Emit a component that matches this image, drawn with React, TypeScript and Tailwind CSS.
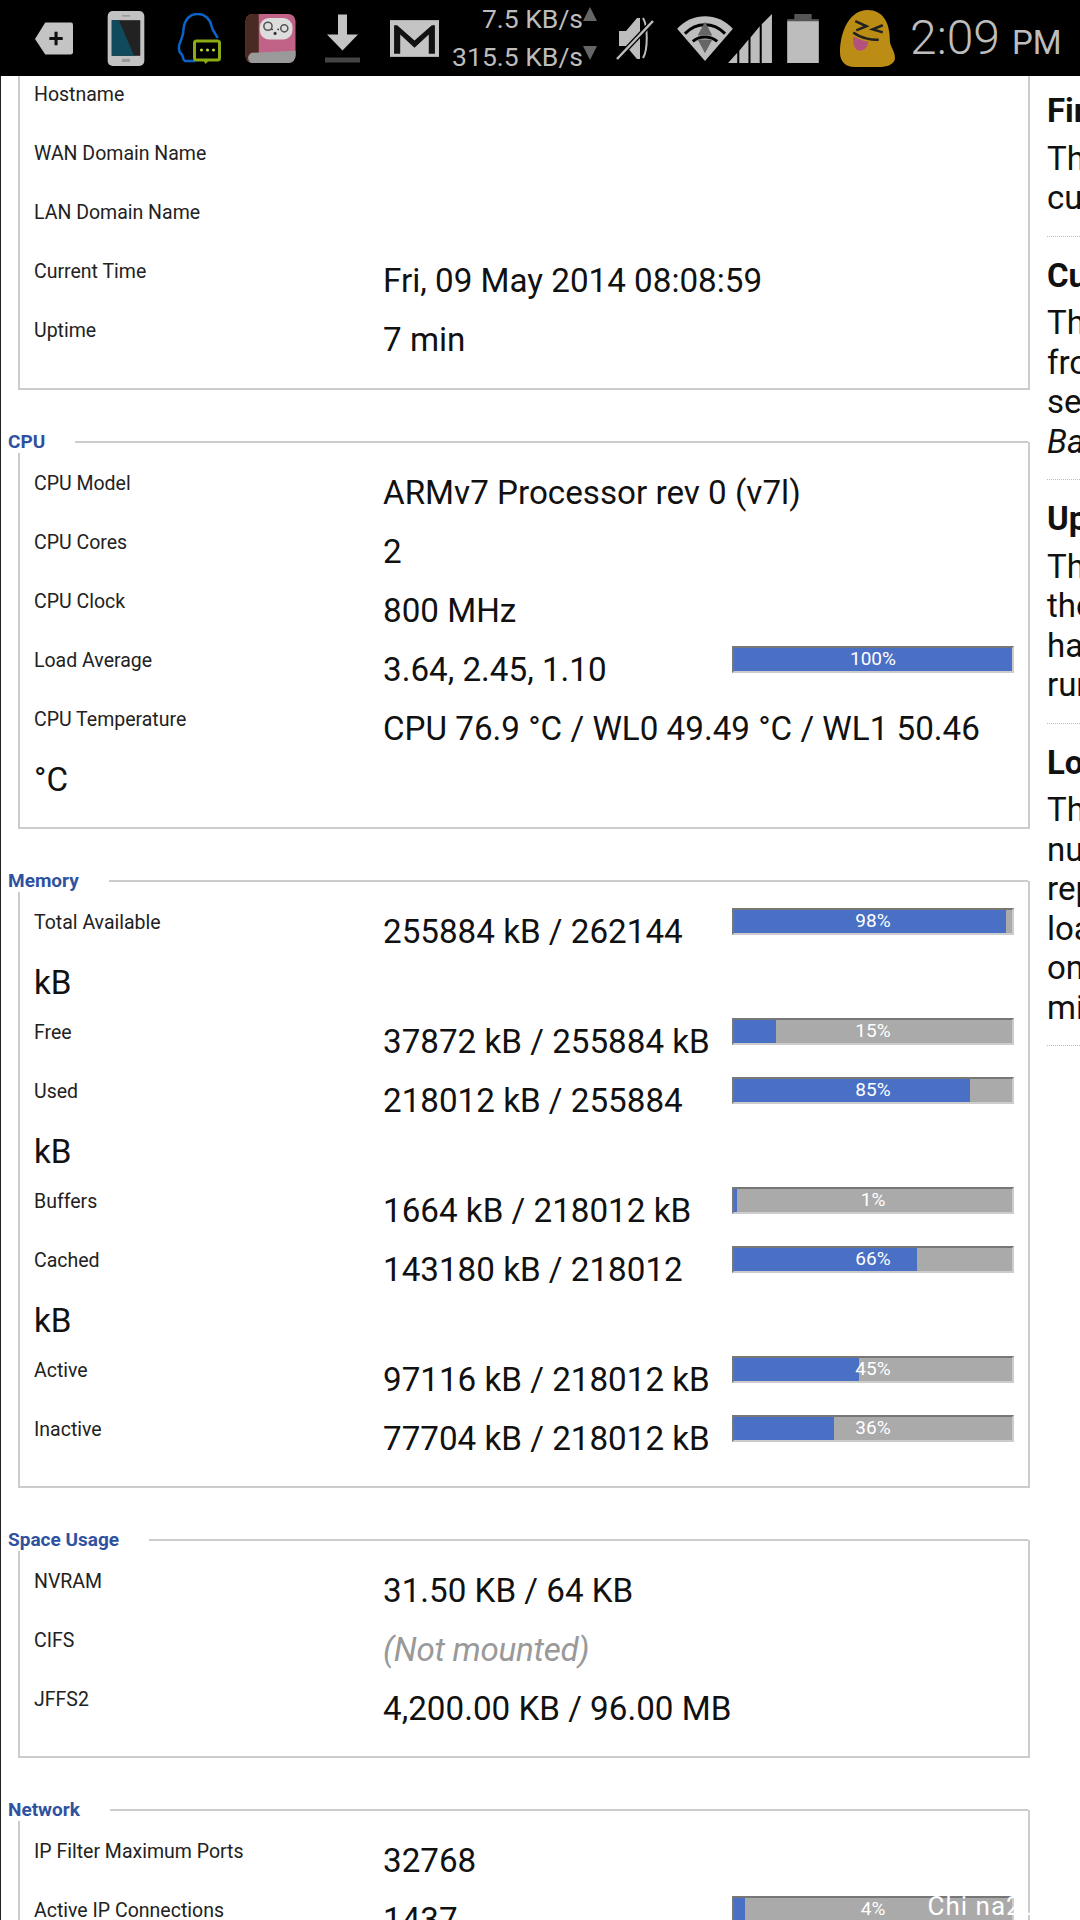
import React from 'react';

type Row = { label: string; value?: string; bar?: number; muted?: boolean };

const SECTIONS: { title: string; rows: Row[] }[] = [
  {
    title: 'CPU',
    rows: [
      { label: 'CPU Model', value: 'ARMv7 Processor rev 0 (v7l)' },
      { label: 'CPU Cores', value: '2' },
      { label: 'CPU Clock', value: '800 MHz' },
      { label: 'Load Average', value: '3.64, 2.45, 1.10', bar: 100 },
      { label: 'CPU Temperature', value: 'CPU 76.9 °C / WL0 49.49 °C / WL1 50.46 °C' },
    ],
  },
  {
    title: 'Memory',
    rows: [
      { label: 'Total Available', value: '255884 kB / 262144 kB', bar: 98 },
      { label: 'Free', value: '37872 kB / 255884 kB', bar: 15 },
      { label: 'Used', value: '218012 kB / 255884 kB', bar: 85 },
      { label: 'Buffers', value: '1664 kB / 218012 kB', bar: 1 },
      { label: 'Cached', value: '143180 kB / 218012 kB', bar: 66 },
      { label: 'Active', value: '97116 kB / 218012 kB', bar: 45 },
      { label: 'Inactive', value: '77704 kB / 218012 kB', bar: 36 },
    ],
  },
  {
    title: 'Space Usage',
    rows: [
      { label: 'NVRAM', value: '31.50 KB / 64 KB' },
      { label: 'CIFS', value: '(Not mounted)', muted: true },
      { label: 'JFFS2', value: '4,200.00 KB / 96.00 MB' },
    ],
  },
  {
    title: 'Network',
    rows: [
      { label: 'IP Filter Maximum Ports', value: '32768' },
      { label: 'Active IP Connections', value: '1437', bar: 4 },
    ],
  },
];

const HELP = [
  { title: 'Firmware Version', lines: ['The version of firmware', 'currently running.'] },
  {
    title: 'Current Time',
    lines: ['The current time taken', 'from the router, and', 'set under', 'Basic'],
  },
  {
    title: 'Uptime',
    lines: ['The length of time', 'the router', 'has been', 'running.'],
  },
  {
    title: 'Load Average',
    lines: ['The load average', 'number', 'represents', 'load', 'on the CPU', 'minutes.'],
  },
];

function InfoRow({ row }: { row: Row }) {
  return (
    <div className="flow-root min-h-[59px] pt-[4px] pb-[4px] pl-[14px] pr-[14px] text-[33.200px] leading-[51px] text-[#111]">
      <div className="float-left w-[349px] text-[19.500px] leading-[33px] text-[#222]">{row.label}</div>
      {row.bar !== undefined && (
        <div className="relative float-right mt-[2px] ml-[10px] h-[27px] w-[282px] border-t-2 border-l-2 border-t-[#777] border-l-[#777] border-r-2 border-b-2 border-r-[#ccc] border-b-[#ccc] bg-[#aaa]">
          <div className="h-full bg-[#4a70c6]" style={{ width: `${row.bar}%` }} />
          <div className="absolute inset-0 text-center text-[19px] leading-[22px] text-white">{row.bar}%</div>
        </div>
      )}
      {row.muted ? <em className="tracking-[-0.300px] text-[#999]">{row.value}</em> : row.value}
    </div>
  );
}

function Section({ title, rows }: { title: string; rows: Row[] }) {
  return (
    <section className="mt-[52px] ml-[17px] flow-root border-r-2 border-b-2 border-[#ccc]">
      <div className="-mt-[11px] -ml-[10px] flex h-[22px] items-center">
        <span className="pr-[30px] text-[19px] font-bold text-[#2f52a0]">{title}</span>
        <div className="flex-1 border-t-2 border-[#ccc]" />
      </div>
      <div className="border-l-2 border-[#ccc] pt-[10px] pb-[18px]">
        {rows.map(r => (
          <InfoRow key={r.label} row={r} />
        ))}
      </div>
    </section>
  );
}

function StatusBar() {
  return (
    <div className="flex h-[76px] items-center bg-black pl-[35px] text-[#bdbdbd]">
      {/* notification tag */}
      <svg width="38" height="33" viewBox="0 0 37 31" className="shrink-0">
        <path d="M10 0H35a2 2 0 0 1 2 2V29a2 2 0 0 1-2 2H10L0 16Z" fill="#c4c4c4" />
        <path d="M17 14h5V9h3v5h5v3h-5v5h-3v-5h-5Z" fill="#111" transform="translate(-3 0)" />
      </svg>
      {/* phone */}
      <svg width="38" height="55" viewBox="0 0 36 54" className="ml-[34px] shrink-0">
        <rect x="0" y="0" width="36" height="54" rx="5" fill="#c2c2c2" />
        <rect x="4" y="9" width="28" height="35" fill="#222" />
        <path d="M4 9h7L26 44H4Z" fill="#114a5c" />
        <rect x="14" y="47" width="8" height="3" rx="1" fill="#999" />
        <rect x="14" y="4" width="8" height="1.5" fill="#999" />
      </svg>
      {/* QQ bubble */}
      <svg width="45" height="51" viewBox="0 0 44 51" className="ml-[31px] shrink-0">
        <path
          d="M19 48H9C6 48 7 43 5 41C2 39 2 35 3 31C5 26 7 22 7 16C8 6 14 1 21 1C29 1 34 7 35 13C36 18 39 20 41 25"
          fill="none"
          stroke="#0b63c8"
          strokeWidth="2.5"
        />
        <rect x="18" y="28" width="25" height="19" rx="2" fill="#000" stroke="#8cab12" strokeWidth="3" />
        <path d="M26 46h8l-5 5Z" fill="#8cab12" />
        <circle cx="25" cy="37" r="1.6" fill="#b9d33a" />
        <circle cx="31" cy="37" r="1.6" fill="#b9d33a" />
        <circle cx="37" cy="37" r="1.6" fill="#b9d33a" />
      </svg>
      {/* pink book */}
      <svg width="51" height="49" viewBox="0 0 49 48" className="ml-[24px] shrink-0">
        <rect x="0" y="0" width="49" height="48" rx="7" fill="#c06386" />
        <path d="M0 7a7 7 0 0 1 7-7h6V38L5 47C2 46 0 44 0 41Z" fill="#4a2a22" />
        <path d="M6 38L49 36V41a7 7 0 0 1-7 7H10a5 5 0 0 1-4-10Z" fill="#9a9a9a" />
        <rect x="14" y="4" width="32" height="21" rx="9" fill="#ddd" />
        <circle cx="22" cy="12" r="4" fill="none" stroke="#555" strokeWidth="1.5" />
        <circle cx="38" cy="14" r="3.5" fill="none" stroke="#555" strokeWidth="1.5" />
        <circle cx="29" cy="19" r="1.5" fill="#333" />
        <circle cx="26" cy="15" r="0.9" fill="#333" />
        <circle cx="32" cy="15" r="0.9" fill="#333" />
      </svg>
      {/* download */}
      <svg width="35" height="49" viewBox="0 0 35 48" className="ml-[29px] shrink-0">
        <path d="M13 0h9V20h11L17.500 36 2 20H13Z" fill="#c4c4c4" />
        <rect x="0" y="43" width="35" height="5" fill="#444" />
      </svg>
      {/* gmail */}
      <svg width="49" height="37" viewBox="0 0 48 36" className="ml-[30px] shrink-0">
        <rect width="48" height="36" fill="#c4c4c4" />
        <path d="M4 33V5h3L24 20 41 5h3V33H38V14L24 27 10 14V33Z" fill="#111" />
      </svg>
      {/* speed */}
      <div className="ml-[12px] flex w-[146px] shrink-0 flex-col text-[26.500px] leading-[38px]">
        <div className="flex items-center justify-end">
          7.5 KB/s
          <svg width="14" height="14" viewBox="0 0 14 14" className="mb-[10px] shrink-0">
            <path d="M7 0L14 14H0Z" fill="#666" />
          </svg>
        </div>
        <div className="flex items-center justify-end">
          315.5 KB/s
          <svg width="14" height="14" viewBox="0 0 14 14" className="mb-[8px] shrink-0">
            <path d="M0 0H14L7 14Z" fill="#666" />
          </svg>
        </div>
      </div>
      {/* muted */}
      <svg width="38" height="46" viewBox="0 0 38 46" className="ml-[19px] shrink-0">
        <path d="M3 16h7L21 3h3V44h-3L10 31H3Z" fill="#bdbdbd" />
        <path d="M27 3c5 8 5 32 0 40" fill="none" stroke="#bdbdbd" strokeWidth="2" />
        <path d="M1 44L37 6" stroke="#000" strokeWidth="5" />
        <path d="M1 44L37 6" stroke="#bdbdbd" strokeWidth="2.500" />
      </svg>
      {/* wifi */}
      <svg width="58" height="45" viewBox="0 0 57 46" className="ml-[22px] shrink-0">
        <path d="M0 13C16-4 41-4 57 13L28.500 46Z" fill="#bdbdbd" />
        <path d="M8 18C20 6 37 6 49 18" fill="none" stroke="#000" strokeWidth="3" />
        <path d="M16 26C23 20 34 20 41 26" fill="none" stroke="#000" strokeWidth="3" />
        <path d="M28.500 6L36 20H21Z" fill="#666" />
        <path d="M21 24H36L28.500 38Z" fill="#666" />
      </svg>
      {/* signal */}
      <svg width="44" height="49" viewBox="0 0 43 48" className="-ml-[6px] shrink-0">
        <path d="M0 48L9 38V48ZM11 36L20 25V48H11ZM22 23L31 12V48H22ZM33 10L43 0V48H33Z" fill="#bdbdbd" />
      </svg>
      {/* battery */}
      <svg width="32" height="49" viewBox="0 0 31 48" className="ml-[15px] shrink-0">
        <rect x="7" y="0" width="17" height="6" fill="#555" />
        <rect x="0" y="5" width="31" height="2" fill="#555" />
        <rect x="0" y="7" width="31" height="41" fill="#bdbdbd" />
      </svg>
      {/* emoji */}
      <svg width="57" height="57" viewBox="0 0 54 56" className="ml-[20px] shrink-0">
        <path
          d="M27 0C42 0 49 12 49 30c0 6 5 10 5 17 0 6-7 9-14 9H14C6 56 0 51 0 42 0 20 10 0 27 0Z"
          fill="#bb8d14"
        />
        <path d="M15 11l11 5-10 4M42 15l-10 4 10 3" fill="none" stroke="#222" strokeWidth="2.500" />
        <path d="M13 22c8 6 20 8 25 7" fill="none" stroke="#222" strokeWidth="2.500" />
        <path d="M13 26c7 3 11 5 15 5-1 6-4 9-8 9-5 0-8-6-7-14Z" fill="#b5517f" />
      </svg>
      {/* clock */}
      <div className="ml-[14px] flex items-baseline whitespace-nowrap">
        <span className="text-[48px] leading-none font-light">2:09</span>
        <span className="ml-[12px] text-[33px] leading-none">PM</span>
      </div>
    </div>
  );
}

export default function App() {
  return (
    <div
      className="relative h-[1920px] w-[1080px] overflow-hidden bg-white"
      style={{ fontFamily: 'Roboto, sans-serif' }}
    >
      <StatusBar />
      <div className="flex border-l border-[#222]">
        <main className="h-[1844px] w-[1029px] shrink-0 overflow-hidden">
          {/* top of status panel is scrolled away */}
          <section className="-mt-[2px] ml-[17px] border-r-2 border-b-2 border-[#ccc]">
            <div className="border-l-2 border-[#ccc] pb-[19px]">
              {[
                { label: 'Hostname' },
                { label: 'WAN Domain Name' },
                { label: 'LAN Domain Name' },
                { label: 'Current Time', value: 'Fri, 09 May 2014 08:08:59' },
                { label: 'Uptime', value: '7 min' },
              ].map(r => (
                <InfoRow key={r.label} row={r} />
              ))}
            </div>
          </section>
          {SECTIONS.map(s => (
            <Section key={s.title} title={s.title} rows={s.rows} />
          ))}
        </main>
        <aside className="min-w-0 flex-1 overflow-hidden pt-[15px] pl-[17px] text-[33px] leading-[39.500px] text-[#111]">
          {HELP.map(h => (
            <div key={h.title} className="mb-[19px] border-b border-dotted border-[#bbb] pb-[18px] whitespace-nowrap">
              <div className="mb-[8px] font-bold">{h.title}</div>
              {h.lines.map(l => (
                <div key={l} className={l === 'Basic' ? 'italic' : ''}>{l}</div>
              ))}
            </div>
          ))}
        </aside>
      </div>
      {/* image host watermark */}
      <div className="absolute right-[43px] bottom-[1px] text-[26px] leading-none tracking-[1px] whitespace-nowrap text-white">
        Chi na2J
      </div>
    </div>
  );
}
